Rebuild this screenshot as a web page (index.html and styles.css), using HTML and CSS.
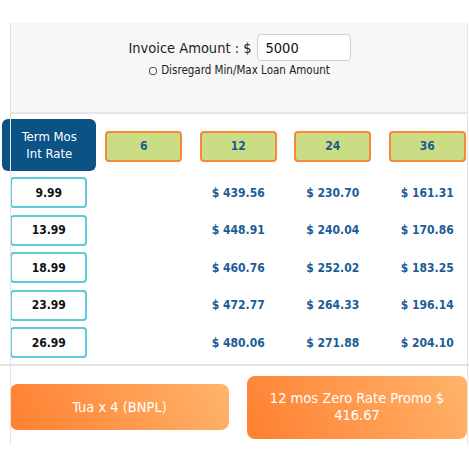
FILE: index.html
```html
<!DOCTYPE html>
<html lang="en">
<head>
    <meta charset="UTF-8">
    <meta name="viewport" content="width=device-width, initial-scale=1.0">
    <title>Loan Calculator</title>
    <link rel="stylesheet" href="styles.css">
</head>
<body>
    <div class="page">
        <div class="frame">
            <div class="amount-panel">
                <div class="amount-row">
                    <label for="amount">Invoice Amount : $</label>
                    <input id="amount" class="amount-input" type="text" value="5000">
                </div>
                <div class="check-row">
                    <span class="check-box"></span>
                    <span>Disregard Min/Max Loan Amount</span>
                </div>
            </div>
        </div>

        <div class="rate-grid">
            <div class="cell"><div class="term-head">Term Mos<br>Int Rate</div></div>
            <div class="cell"><div class="term-btn">6</div></div>
            <div class="cell"><div class="term-btn">12</div></div>
            <div class="cell"><div class="term-btn">24</div></div>
            <div class="cell"><div class="term-btn">36</div></div>

            <div class="cell"><div class="rate-box">9.99</div></div>
            <div class="cell"></div>
            <div class="cell amount">$ 439.56</div>
            <div class="cell amount">$ 230.70</div>
            <div class="cell amount">$ 161.31</div>

            <div class="cell"><div class="rate-box">13.99</div></div>
            <div class="cell"></div>
            <div class="cell amount">$ 448.91</div>
            <div class="cell amount">$ 240.04</div>
            <div class="cell amount">$ 170.86</div>

            <div class="cell"><div class="rate-box">18.99</div></div>
            <div class="cell"></div>
            <div class="cell amount">$ 460.76</div>
            <div class="cell amount">$ 252.02</div>
            <div class="cell amount">$ 183.25</div>

            <div class="cell"><div class="rate-box">23.99</div></div>
            <div class="cell"></div>
            <div class="cell amount">$ 472.77</div>
            <div class="cell amount">$ 264.33</div>
            <div class="cell amount">$ 196.14</div>

            <div class="cell"><div class="rate-box">26.99</div></div>
            <div class="cell"></div>
            <div class="cell amount">$ 480.06</div>
            <div class="cell amount">$ 271.88</div>
            <div class="cell amount">$ 204.10</div>
        </div>

        <div class="divider"></div>

        <div class="frame">
            <div class="promo-row">
                <button class="promo-btn small">Tua x 4 (BNPL)</button>
                <button class="promo-btn">12 mos Zero Rate Promo $ 416.67</button>
            </div>
        </div>
    </div>
</body>
</html>
```

FILE: styles.css
```css
* {
    box-sizing: border-box;
    margin: 0;
    padding: 0;
}
html, body {
    width: 469px;
    height: 469px;
    overflow: hidden;
    background-color: #fff;
}
body {
    font-family: "DejaVu Sans Condensed", "DejaVu Sans", sans-serif;
    color: #222;
}
.page {
    position: relative;
    padding-top: 23px;
}
.page::before {
    content: "";
    position: absolute;
    left: 10px;
    top: 23px;
    width: 456px;
    height: 422px;
    border-left: 1px solid #e4e4e4;
    border-right: 1px solid #e4e4e4;
    pointer-events: none;
}
.frame {
    margin-left: 10px;
    width: 457px;
}
.amount-panel {
    height: 91px;
    background-color: #f7f7f7;
    border-bottom: 2px solid #e6e6e6;
    padding-top: 11px;
    text-align: center;
}
.amount-row {
    display: flex;
    justify-content: center;
    align-items: center;
    gap: 5px;
    font-size: 14.5px;
    color: #222;
    padding-left: 2px;
}
.amount-input {
    width: 94px;
    height: 27px;
    border: 1px solid #cfcfcf;
    border-radius: 4px;
    background: #fff;
    font-family: inherit;
    font-size: 14.5px;
    color: #111;
    padding: 0 8px;
}
.check-row {
    display: flex;
    justify-content: center;
    align-items: center;
    gap: 4px;
    margin-top: 2px;
    font-size: 11.5px;
    color: #222;
    padding-left: 2px;
}
.check-box {
    width: 8px;
    height: 8px;
    border: 1px solid #555;
    border-radius: 3px;
    margin-top: 2px;
}
.rate-grid {
    display: grid;
    grid-template-columns: repeat(5, 94.5px);
    grid-template-rows: 52px repeat(5, 31.5px);
    row-gap: 6px;
    margin: 5px 0 0 2px;
    width: 473px;
}
.cell {
    display: flex;
    align-items: center;
    justify-content: center;
}
.term-head {
    width: 94px;
    height: 52px;
    background-color: #0b5285;
    border-radius: 6px;
    color: #fff;
    font-size: 13px;
    line-height: 17px;
    display: flex;
    align-items: center;
    justify-content: center;
    text-align: center;
}
.term-btn {
    width: 77px;
    height: 31px;
    margin-top: 2px;
    background-color: #cbdd84;
    border: 2px solid #f7883a;
    border-radius: 4px;
    color: #1b5a8e;
    font-weight: bold;
    font-size: 12px;
    display: flex;
    align-items: center;
    justify-content: center;
}
.rate-box {
    width: 77px;
    height: 31px;
    margin-left: -1px;
    background-color: #fff;
    border: 2px solid #5ec9d8;
    border-radius: 4px;
    color: #111;
    font-weight: bold;
    font-size: 12px;
    display: flex;
    align-items: center;
    justify-content: center;
}
.amount {
    color: #1b5c96;
    font-weight: bold;
    font-size: 12px;
}
.divider {
    height: 2px;
    background-color: #e2e2e2;
    margin-top: 5px;
}
.promo-row {
    display: flex;
    align-items: center;
    justify-content: space-between;
    height: 79px;
    padding-top: 4px;
}
.promo-btn {
    width: 220px;
    height: 63px;
    border: none;
    border-radius: 8px;
    background: linear-gradient(60deg, #ff7f30 0%, #ffb46c 100%);
    color: #fff;
    font-family: "DejaVu Sans Condensed", "DejaVu Sans", sans-serif;
    font-size: 14.5px;
    line-height: 17px;
    padding: 0 14px;
}
.promo-btn.small {
    width: 219px;
    height: 46px;
}
```
